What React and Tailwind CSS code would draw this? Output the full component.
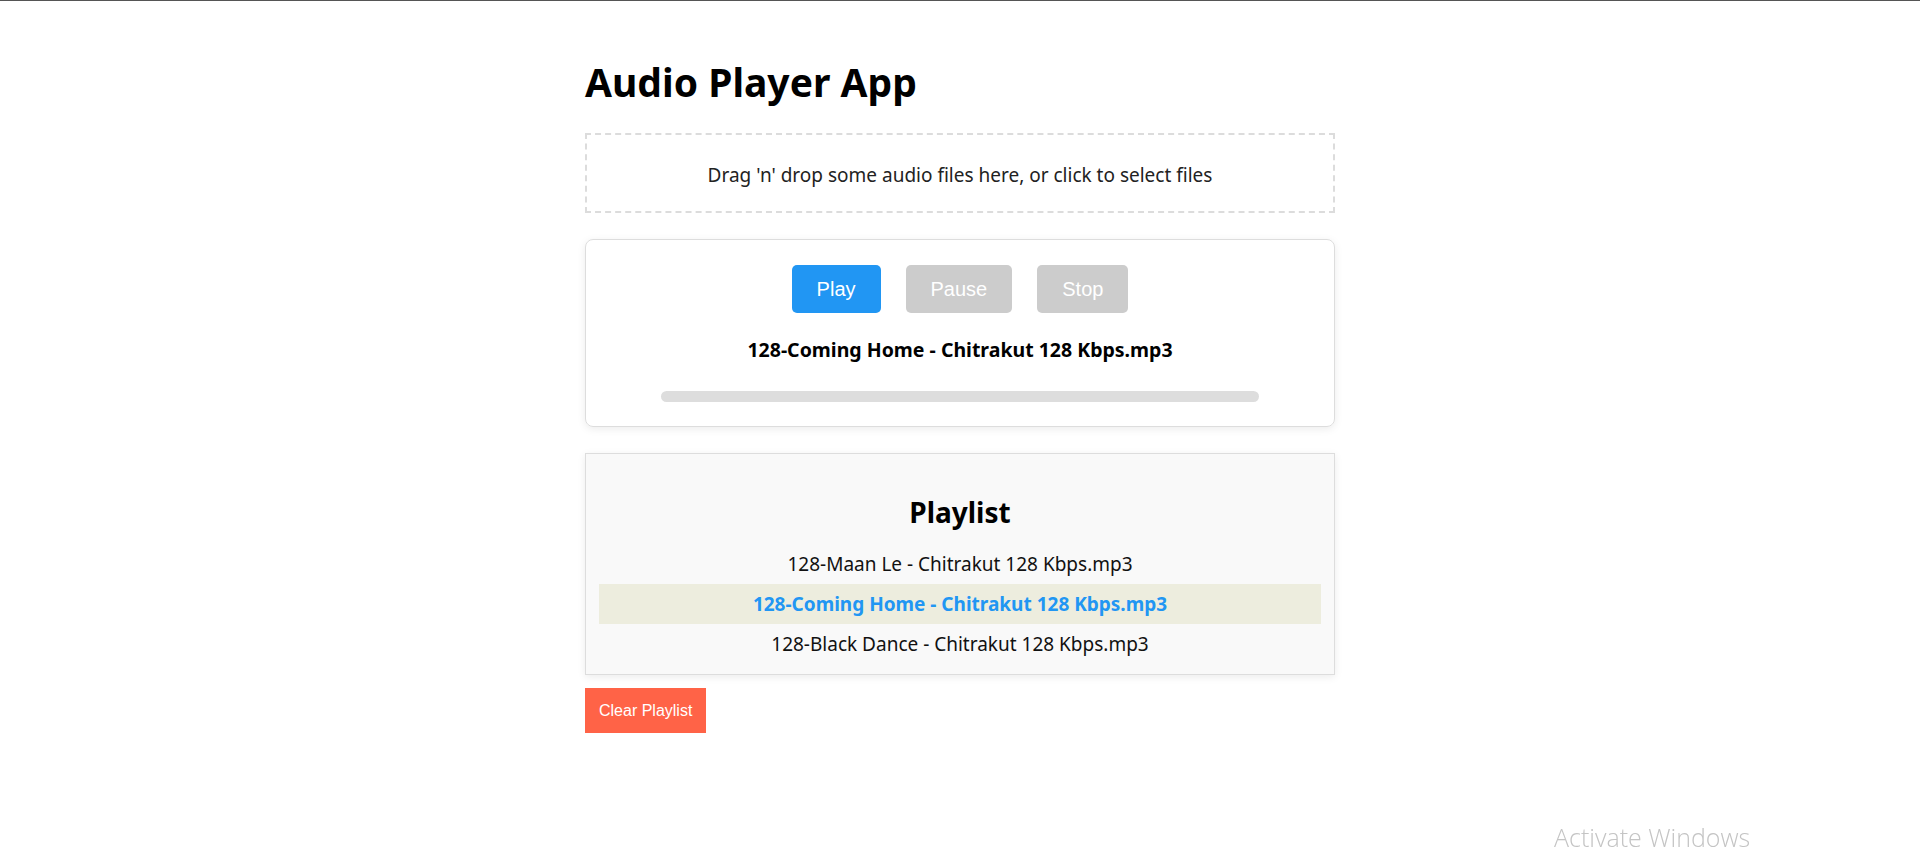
import React, { useState } from "react";

const tracks = [
    "128-Maan Le - Chitrakut 128 Kbps.mp3",
    "128-Coming Home - Chitrakut 128 Kbps.mp3",
    "128-Black Dance - Chitrakut 128 Kbps.mp3",
];

export default function App() {
    const [current, setCurrent] = useState(1);

    return (
        <div className="min-h-[857px] bg-white border-t border-[#555] font-['Noto_Sans',sans-serif] text-black">
            <div className="w-[750px] mx-auto pt-[57px]">
                <h1 className="text-[39px] leading-[48px] font-bold">Audio Player App</h1>

                <div className="mt-[27px] h-[80px] pt-[4px] border-2 border-dashed border-[#dcdcdc] flex items-center justify-center text-[19px] text-[#222]">
                    Drag 'n' drop some audio files here, or click to select files
                </div>

                <div className="mt-[26px] h-[188px] border border-[#ddd] rounded-lg shadow-[0_2px_8px_rgba(0,0,0,0.08)] flex flex-col items-center pt-[25px]">
                    <div className="flex gap-[25px] font-['Liberation_Sans',Arial,sans-serif] text-[20px] text-white">
                        <button className="h-[48px] px-[25px] rounded-[5px] bg-[#2196f3]">Play</button>
                        <button className="h-[48px] px-[25px] rounded-[5px] bg-[#cccccc]">Pause</button>
                        <button className="h-[48px] px-[25px] rounded-[5px] bg-[#cccccc]">Stop</button>
                    </div>
                    <p className="mt-[22px] text-[19.5px] leading-[30px] font-bold">{tracks[current]}</p>
                    <div className="mt-[26px] w-[598px] h-[11px] rounded-full bg-[#dddddd]" />
                </div>

                <div className="mt-[26px] h-[222px] bg-[#f9f9f9] border border-[#ddd] shadow-[0_2px_8px_rgba(0,0,0,0.08)] px-[13px] pt-[42px]">
                    <h2 className="text-center text-[28px] leading-[32px] font-bold">Playlist</h2>
                    <ul className="mt-[16px]">
                        {tracks.map((t, i) => (
                            <li
                                key={t}
                                onClick={() => setCurrent(i)}
                                className={
                                    i === current
                                        ? "h-[40px] flex items-center justify-center text-[19px] font-bold text-[#2196f3] bg-[#ededde] cursor-pointer"
                                        : "h-[40px] flex items-center justify-center text-[19px] text-[#111] cursor-pointer"
                                }
                            >
                                {t}
                            </li>
                        ))}
                    </ul>
                </div>

                <button className="mt-[13px] h-[45px] px-[14px] bg-[#ff6347] text-white text-[16px] font-['Liberation_Sans',Arial,sans-serif]">
                    Clear Playlist
                </button>
            </div>

            <div className="fixed left-[1554px] top-[819px] text-[25px] text-[#c4c4c4] font-light font-['Open_Sans',sans-serif]">
                Activate Windows
            </div>
        </div>
    );
}
